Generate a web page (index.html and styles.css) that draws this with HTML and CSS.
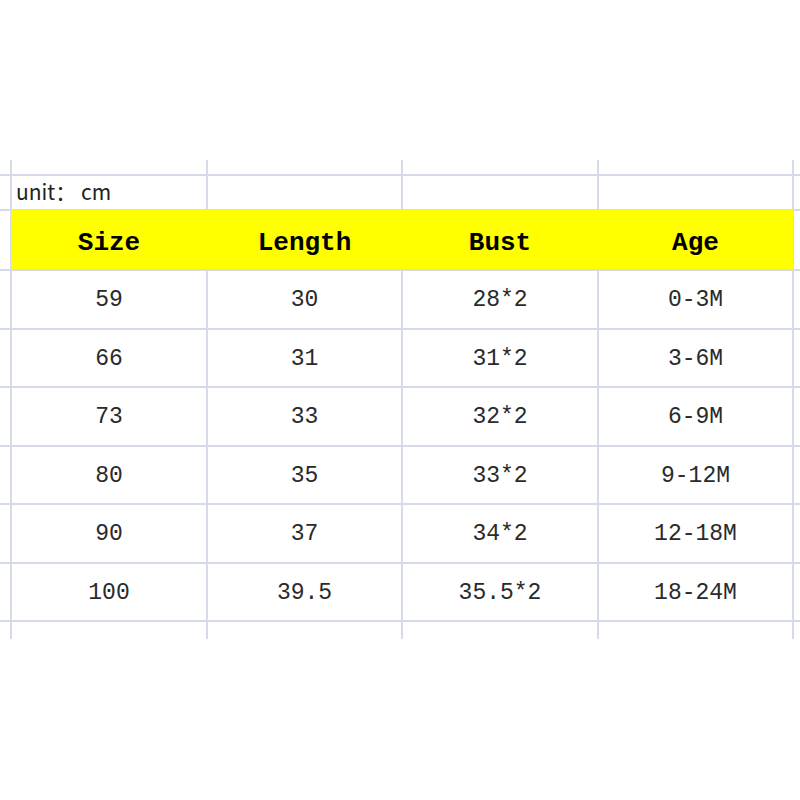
FILE: index.html
```html
<!DOCTYPE html>
<html>
<head>
<meta charset="utf-8">
<link rel="stylesheet" href="styles.css">
</head>
<body>
<div class="sheet">
  <div class="c"></div><div class="c"></div><div class="c"></div><div class="c"></div><div class="c"></div><div class="c"></div>
  <div class="c"></div><div class="c unit">unit： cm</div><div class="c"></div><div class="c"></div><div class="c"></div><div class="c"></div>
  <div class="c"></div>
  <div class="head"><span>Size</span><span>Length</span><span>Bust</span><span>Age</span></div>
  <div class="c"></div>
  <div class="c"></div><div class="c d">59</div><div class="c d">30</div><div class="c d">28*2</div><div class="c d">0-3M</div><div class="c"></div>
  <div class="c"></div><div class="c d">66</div><div class="c d">31</div><div class="c d">31*2</div><div class="c d">3-6M</div><div class="c"></div>
  <div class="c"></div><div class="c d">73</div><div class="c d">33</div><div class="c d">32*2</div><div class="c d">6-9M</div><div class="c"></div>
  <div class="c"></div><div class="c d">80</div><div class="c d">35</div><div class="c d">33*2</div><div class="c d">9-12M</div><div class="c"></div>
  <div class="c"></div><div class="c d">90</div><div class="c d">37</div><div class="c d">34*2</div><div class="c d">12-18M</div><div class="c"></div>
  <div class="c"></div><div class="c d">100</div><div class="c d">39.5</div><div class="c d">35.5*2</div><div class="c d">18-24M</div><div class="c"></div>
  <div class="c"></div><div class="c"></div><div class="c"></div><div class="c"></div><div class="c"></div><div class="c"></div>
</div>
</body>
</html>
```
FILE: styles.css
```css
html, body { margin: 0; padding: 0; background: #fff; }
body { width: 800px; height: 800px; }
.sheet {
  margin-top: 160px;
  display: grid;
  grid-template-columns: 10px 194px 193px 194px 193px 6px;
  grid-template-rows: 14px 33px 58px repeat(6, 56.5px) 17px;
  gap: 2px;
  background: #d5dbe9;
  width: 800px;
}
.c { background: #fff; }
.unit {
  font-family: "Noto Sans CJK SC", "Noto Sans", sans-serif;
  font-size: 21px;
  color: #222;
  line-height: 31px;
  padding-left: 4px;
  white-space: nowrap;
  overflow: visible;
}
.head {
  grid-column: 2 / 6;
  background: #ffff00;
  display: grid;
  grid-template-columns: 196px 195px 196px 195px;
  align-items: center;
  margin: -1px -1px 0 -1px;
  height: 59px;
}
.head span {
  text-align: center;
  font-family: "Liberation Mono", monospace;
  font-weight: bold;
  font-size: 26px;
  color: #000;
  padding-top: 6px;
}
.d {
  display: flex;
  align-items: center;
  justify-content: center;
  font-family: "Liberation Mono", monospace;
  font-size: 23px;
  color: #2a2a2a;
  padding-top: 2px;
}
```
